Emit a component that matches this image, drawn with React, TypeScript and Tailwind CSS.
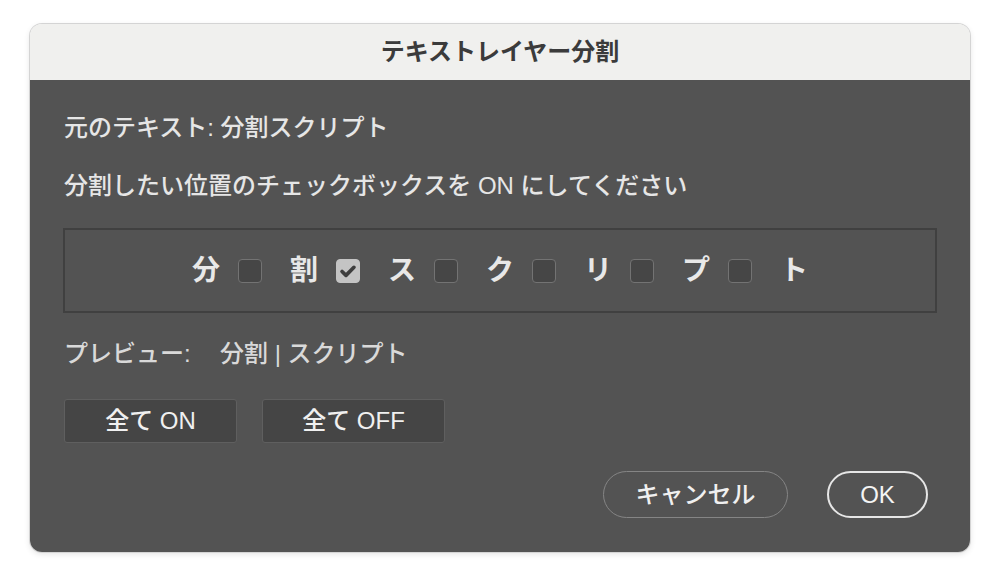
import { useState } from "react";

const FONT = {
  fontFamily: '"Liberation Sans", "Noto Sans CJK JP", sans-serif',
};

const chars = ["分", "割", "ス", "ク", "リ", "プ", "ト"];

function Box({ checked, onClick }: { checked: boolean; onClick: () => void }) {
  return (
    <button
      onClick={onClick}
      className={`w-[24px] h-[24px] rounded-[4px] flex items-center justify-center ${
        checked
          ? "bg-[#c4c4c4] border border-[#c4c4c4]"
          : "bg-[#464646] border-[1.5px] border-[#737373]"
      }`}
    >
      {checked && (
        <svg viewBox="0 0 24 24" className="w-[22px] h-[22px]">
          <path
            d="M5.5 12.5l4.3 4.3L18.5 8"
            fill="none"
            stroke="#3e3e3e"
            strokeWidth="4"
            strokeLinecap="round"
            strokeLinejoin="round"
          />
        </svg>
      )}
    </button>
  );
}

export default function App() {
  // split after index i
  const [splits, setSplits] = useState<boolean[]>([false, true, false, false, false, false]);

  const preview = chars
    .map((c, i) => (i < splits.length && splits[i] ? c + " | " : c))
    .join("");

  return (
    <div className="w-[1002px] h-[572px] bg-white pt-[24px] pl-[30px]" style={FONT}>
      <div className="w-[940px] h-[528px] rounded-[12px] overflow-hidden flex flex-col shadow-[0_0_0_1px_#d4d4d4,0_2px_6px_rgba(0,0,0,0.12)]">
        {/* Title bar */}
        <div className="h-[56px] bg-[#f0f0ee] flex items-center justify-center shrink-0">
          <span className="text-[24px] font-bold text-[#3b3b3b]">
            テキストレイヤー分割
          </span>
        </div>

        {/* Body */}
        <div className="flex-1 bg-[#535353] px-[33px] pt-[32px] flex flex-col">
          <div className="h-[32px] flex items-center text-[24px] font-medium text-[#e6e6e6] pl-[1px]">
            元のテキスト: 分割スクリプト
          </div>
          <div className="h-[32px] mt-[26px] flex items-center text-[24px] font-medium text-[#e6e6e6] pl-[1px]">
            分割したい位置のチェックボックスを ON にしてください
          </div>

          <div className="mt-[26px] h-[85px] border-2 border-[#404040] flex items-center justify-center">
            {chars.map((c, i) => (
              <div key={c} className="flex items-center">
                <span className="w-[28px] text-center text-[28px] font-bold text-[#e8e8e8] leading-none">
                  {c}
                </span>
                {i < chars.length - 1 && (
                  <div className="ml-[18px] mr-[28px]">
                    <Box
                      checked={splits[i]}
                      onClick={() =>
                        setSplits((s) => s.map((v, j) => (j === i ? !v : v)))
                      }
                    />
                  </div>
                )}
              </div>
            ))}
          </div>

          <div className="h-[32px] mt-[25px] flex items-center text-[24px] font-medium text-[#d9d9d9] pl-[1px]">
            <span className="w-[156px]">プレビュー:</span>
            <span>{preview}</span>
          </div>

          <div className="mt-[29px] flex gap-[25px] pl-[1px]">
            <button
              onClick={() => setSplits((s) => s.map(() => true))}
              className="w-[173px] h-[44px] bg-[#454545] border border-[#5f5f5f] rounded-[3px] text-[24px] font-medium text-[#f0f0f0]"
            >
              全て ON
            </button>
            <button
              onClick={() => setSplits((s) => s.map(() => false))}
              className="w-[183px] h-[44px] bg-[#454545] border border-[#5f5f5f] rounded-[3px] text-[24px] font-medium text-[#f0f0f0]"
            >
              全て OFF
            </button>
          </div>

          <div className="mt-[28px] flex justify-end gap-[39px] pr-[9px]">
            <button className="w-[185px] h-[47px] rounded-full border-[1.5px] border-[#858585] text-[24px] font-medium text-[#f0f0f0]">
              キャンセル
            </button>
            <button className="w-[101px] h-[47px] rounded-full border-2 border-[#e6e6e6] text-[24px] font-medium text-[#f4f4f4]">
              OK
            </button>
          </div>
        </div>
      </div>
    </div>
  );
}
